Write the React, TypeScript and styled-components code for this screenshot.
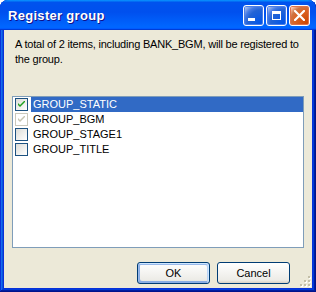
import React from 'react';
import styled, {createGlobalStyle} from 'styled-components';

const groups = [
    {name: 'GROUP_STATIC', checked: true, disabled: false, selected: true},
    {name: 'GROUP_BGM', checked: true, disabled: true, selected: false},
    {name: 'GROUP_STAGE1', checked: false, disabled: false, selected: false},
    {name: 'GROUP_TITLE', checked: false, disabled: false, selected: false},
];

const GlobalStyle = createGlobalStyle`
  html, body {
    margin: 0;
    padding: 0;
    background: #ffffff;
  }
`;

function CheckMark({color}: {color: string}) {
    return (
        <svg width="7" height="7" viewBox="0 0 7 7">
            <path d="M0 2 L0 4 L2 6 L7 1 L7 -1 L2 4 Z" fill={color}/>
        </svg>
    );
}

function Grip() {
    return (
        <svg width="11" height="11" viewBox="0 0 11 11">
            {[[8, 0], [4, 4], [8, 4], [0, 8], [4, 8], [8, 8]].map(([x, y]) => (
                <g key={`${x}-${y}`}>
                    <rect x={x + 1} y={y + 1} width="2" height="2" fill="#ffffff"/>
                    <rect x={x} y={y} width="2" height="2" fill="#c3bfa8"/>
                </g>
            ))}
        </svg>
    );
}

export default function App() {
    return (
        <>
            <GlobalStyle/>
            <S.Window>
                <S.TitleBar>
                    <S.Title>Register group</S.Title>
                    <S.Controls>
                        <S.ControlButton>
                            <S.MinGlyph/>
                        </S.ControlButton>
                        <S.ControlButton>
                            <S.MaxGlyph/>
                        </S.ControlButton>
                        <S.ControlButton $close>
                            <svg width="11" height="11" viewBox="0 0 11 11">
                                <path d="M1 1 L10 10 M10 1 L1 10" stroke="#ffffff" strokeWidth="2.2" strokeLinecap="square"/>
                            </svg>
                        </S.ControlButton>
                    </S.Controls>
                </S.TitleBar>
                <S.Body>
                    <S.Message>
                        A total of 2 items, including BANK_BGM, will be registered to the group.
                    </S.Message>
                    <S.List>
                        {groups.map(group => (
                            <S.Row key={group.name}>
                                <S.Checkbox $disabled={group.disabled}>
                                    {group.checked && <CheckMark color={group.disabled ? '#c7c5b2' : '#21a121'}/>}
                                </S.Checkbox>
                                <S.Label $selected={group.selected}>{group.name}</S.Label>
                            </S.Row>
                        ))}
                    </S.List>
                    <S.Footer>
                        <S.Button $default>OK</S.Button>
                        <S.Button>Cancel</S.Button>
                    </S.Footer>
                    <S.GripCorner>
                        <Grip/>
                    </S.GripCorner>
                </S.Body>
            </S.Window>
        </>
    );
}

const S = {
    Window: styled.div`
      width: 316px;
      height: 292px;
      box-sizing: border-box;
      display: flex;
      flex-direction: column;
      background: #0831d9;
      border-radius: 8px 8px 0 0;
      padding: 0 4px 4px 4px;
      box-shadow: inset -1px -1px #00138c, inset 1px 1px #0831d9, inset -2px -2px #001ea0,
      inset 2px 2px #166aee, inset -3px -3px #003bda, inset 3px 3px #0855dd;
      font-family: "Liberation Sans", Arial, sans-serif;
    `,
    TitleBar: styled.div`
      height: 30px;
      margin: 0 -4px;
      padding: 0 6px 0 8px;
      box-sizing: border-box;
      display: flex;
      align-items: center;
      justify-content: space-between;
      border-radius: 8px 8px 0 0;
      background: linear-gradient(180deg, #0997ff, #0053ee 8%, #0050ee 40%, #06f 88%, #06f 93%, #005bff 95%, #003dd7 96%, #003dd7);
    `,
    Title: styled.div`
      color: #ffffff;
      font-weight: bold;
      font-size: 13px;
      letter-spacing: 0.3px;
      text-shadow: 1px 1px #0f1089;
      margin-top: 1px;
    `,
    Controls: styled.div`
      display: flex;
      gap: 2px;
      margin-top: 1px;
    `,
    ControlButton: styled.div<{ $close?: boolean }>`
      width: 21px;
      height: 21px;
      box-sizing: border-box;
      border: 1px solid #ffffff;
      border-radius: 3px;
      display: flex;
      align-items: center;
      justify-content: center;
      background: ${p => p.$close
              ? 'radial-gradient(circle at 90% 90%, #cc4600 0%, #dc6527 55%, #cd7546 70%, #ffccb2 90%, #fff 100%)'
              : 'radial-gradient(circle at 90% 90%, #0054e9 0%, #2263d5 55%, #4479e4 70%, #a3bbec 90%, #fff 100%)'};
      box-shadow: inset 0 0 0 1px ${p => p.$close ? '#e0724a' : '#4a7de8'};
    `,
    MinGlyph: styled.div`
      width: 7px;
      height: 3px;
      background: #ffffff;
      margin: 7px 4px 0 0;
    `,
    MaxGlyph: styled.div`
      width: 9px;
      height: 9px;
      box-sizing: border-box;
      border: 1px solid #ffffff;
      border-top-width: 3px;
    `,
    Body: styled.div`
      position: relative;
      flex: 1;
      background: #ece9d8;
      padding: 7px 8px 0 8px;
      display: flex;
      flex-direction: column;
      font-size: 11px;
      color: #000000;
    `,
    Message: styled.div`
      padding: 0 3px;
      line-height: 15px;
      height: 30px;
      letter-spacing: -0.2px;
    `,
    List: styled.div`
      margin-top: 29px;
      height: 152px;
      box-sizing: border-box;
      border: 1px solid #7f9db9;
      background: #ffffff;
    `,
    Row: styled.div`
      display: flex;
      align-items: center;
      height: 15px;
      padding-left: 2px;
    `,
    Checkbox: styled.div<{ $disabled?: boolean }>`
      width: 13px;
      height: 13px;
      box-sizing: border-box;
      border: 1px solid ${p => p.$disabled ? '#cac8bb' : '#1c5180'};
      background: ${p => p.$disabled ? '#ffffff' : 'linear-gradient(135deg, #dcdcd7, #ffffff)'};
      display: flex;
      align-items: center;
      justify-content: center;
    `,
    Label: styled.div<{ $selected?: boolean }>`
      flex: 1;
      height: 15px;
      line-height: 15px;
      margin-left: 3px;
      padding-left: 2px;
      background: ${p => p.$selected ? '#316ac5' : 'transparent'};
      color: ${p => p.$selected ? '#ffffff' : '#000000'};
    `,
    Footer: styled.div`
      display: flex;
      justify-content: flex-end;
      gap: 7px;
      margin-top: 14px;
      padding-right: 14px;
    `,
    Button: styled.div<{ $default?: boolean }>`
      width: 73px;
      height: 22px;
      box-sizing: border-box;
      border: 1px solid #003c74;
      border-radius: 3px;
      background: linear-gradient(180deg, #ffffff, #ecebe6 86%, #d6d0c5);
      display: flex;
      align-items: center;
      justify-content: center;
      font-size: 11px;
      box-shadow: ${p => p.$default
              ? 'inset -1px 1px #cee7ff, inset 1px 2px #98b8ea, inset -2px 2px #bcd4f6, inset 1px -1px #89ade4, inset 2px -2px #89ade4'
              : 'none'};
    `,
    GripCorner: styled.div`
      position: absolute;
      right: 1px;
      bottom: 1px;
      display: flex;
    `,
};
